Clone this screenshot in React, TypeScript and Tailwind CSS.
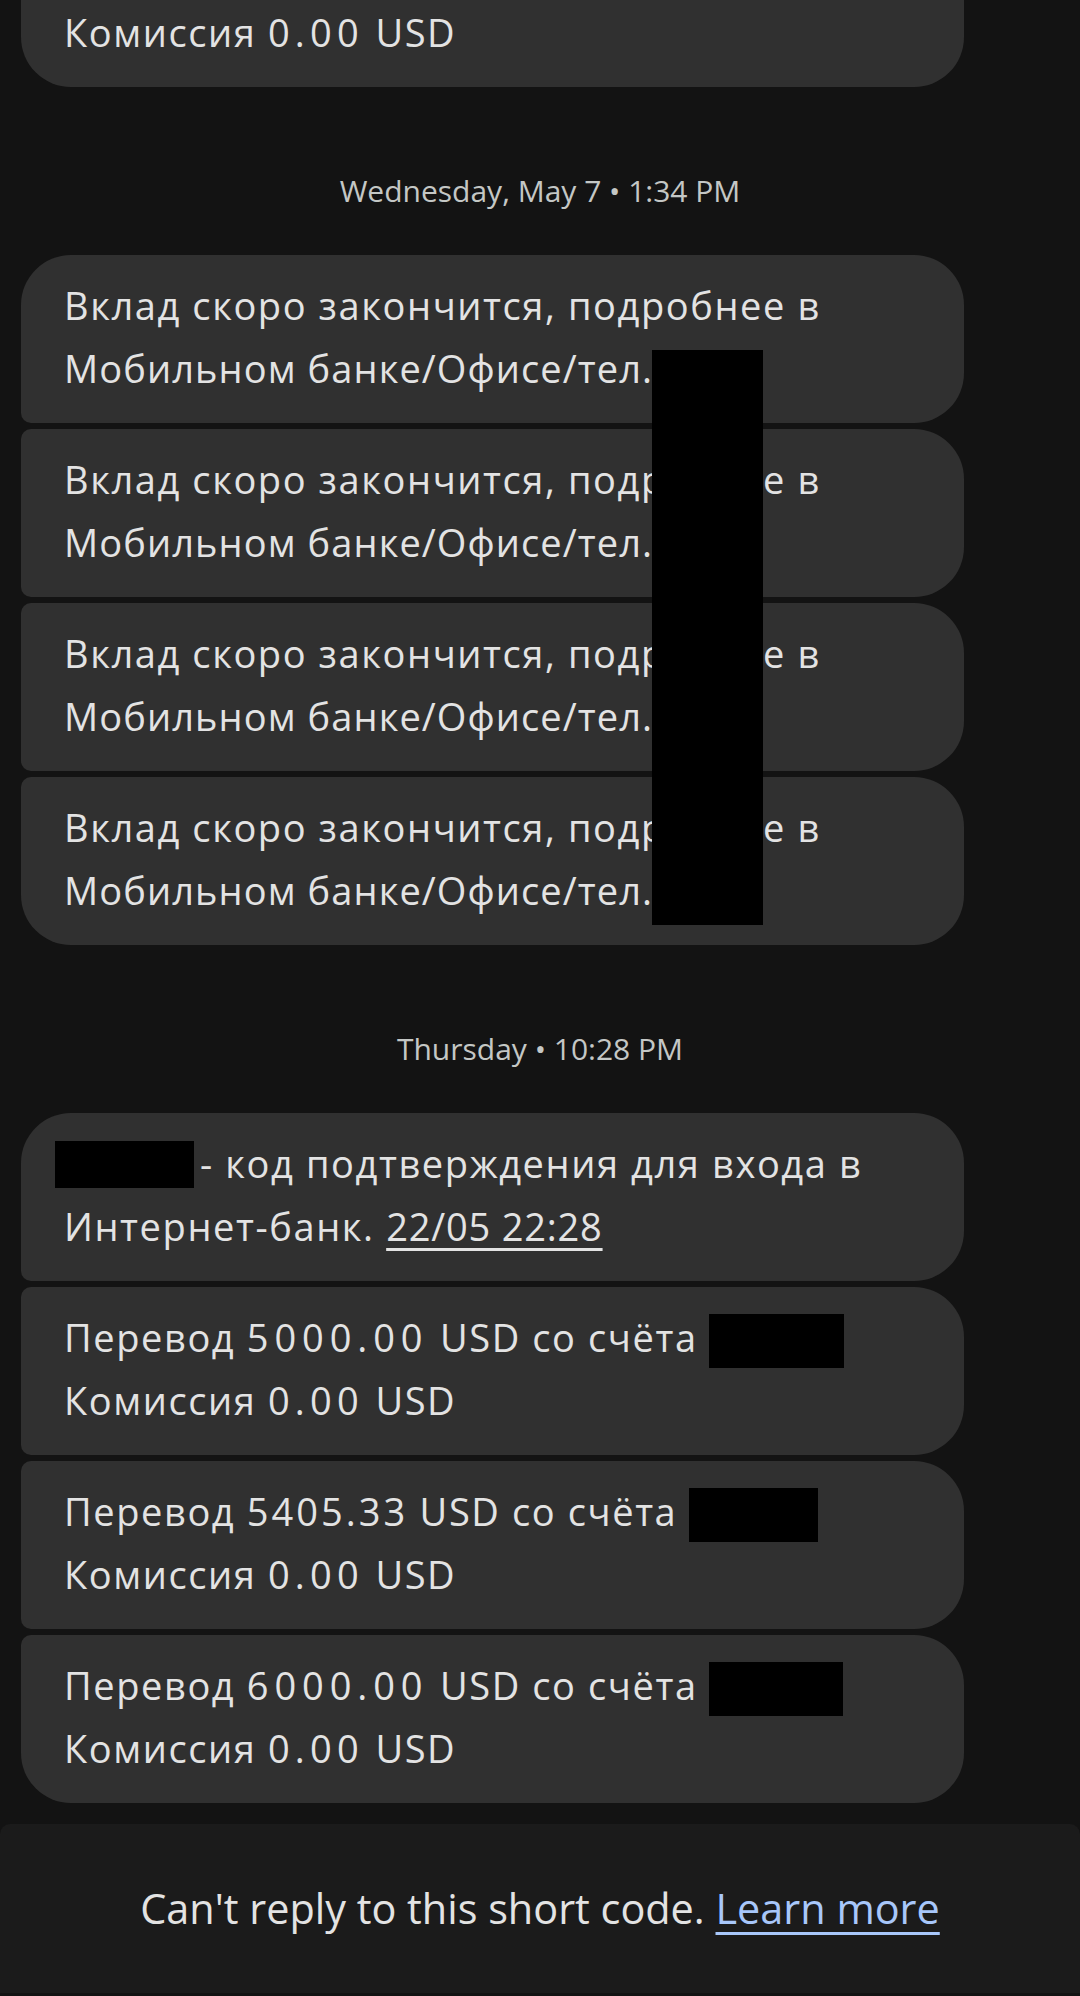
import React from "react";

type Pos = "first" | "middle" | "last";

const FONT = { fontFamily: "'Open Sans', Roboto, sans-serif" };

const cornerClass: Record<Pos, string> = {
  first: "rounded-tl-[50px] rounded-bl-[10px]",
  middle: "rounded-tl-[10px] rounded-bl-[10px]",
  last: "rounded-tl-[10px] rounded-bl-[50px]",
};

const Bubble = ({ pos, children }: { pos: Pos; children: React.ReactNode }) => (
  <div
    className={`ml-[21px] w-[943px] bg-[#303030] rounded-tr-[50px] rounded-br-[50px] ${cornerClass[pos]} pl-[43px] pr-[30px] pt-[19px] pb-[23px] text-[38px] leading-[63px] tracking-[1.6px] text-[#e3e3e3] whitespace-nowrap`}
  >
    {children}
  </div>
);

// black box hiding an account number
const Redact = ({ w }: { w: string }) => (
  <span className={`inline-block bg-black h-[54px] align-[-16px] ${w}`} />
);

const DateHeader = ({ label }: { label: string }) => (
  <div className="pt-[84px] pb-[44px] text-center text-[30px] leading-[40px] text-[#c4c7c5]">{label}</div>
);

const Deposit = ({ pos }: { pos: Pos }) => (
  <Bubble pos={pos}>
    Вклад скоро закончится, подробнее в
    <br />
    <span className="tracking-[1.1px]">Мобильном банке/Офисе/тел.</span>
  </Bubble>
);

const Fee = () => (
  <>
    Комиссия <span className="tracking-[5.2px]">0.00</span> USD
  </>
);

const Transfer = ({ pos, amount, track, w }: { pos: Pos; amount: string; track: string; w: string }) => (
  <Bubble pos={pos}>
    Перевод <span className={track}>{amount}</span> USD со счёта <Redact w={w} />
    <br />
    <Fee />
  </Bubble>
);

export default function App() {
  return (
    <div className="h-[1996px] overflow-hidden bg-[#131313]" style={FONT}>
      <div className="-mt-[81px] flex flex-col">
        <Bubble pos="last">
          Перевод 3000.00 USD со счёта
          <br />
          <Fee />
        </Bubble>

        <DateHeader label="Wednesday, May 7 • 1:34 PM" />

        <div className="relative flex flex-col gap-[6px]">
          <Deposit pos="first" />
          <Deposit pos="middle" />
          <Deposit pos="middle" />
          <Deposit pos="last" />
          <div className="absolute left-[652px] top-[95px] w-[111px] h-[575px] bg-black" />
        </div>

        <DateHeader label="Thursday • 10:28 PM" />

        <div className="flex flex-col gap-[6px]">
          <Bubble pos="first">
            <span className="inline-block bg-black w-[139px] h-[47px] align-[-10px] -ml-[9px] mr-[6px]" />
            - код подтверждения для входа в
            <br />
            Интернет-банк.{" "}
            <span className="underline decoration-[2.5px] underline-offset-[7px] tracking-[0.8px]">22/05 22:28</span>
          </Bubble>
          <Transfer pos="middle" amount="5000.00" track="tracking-[5.9px]" w="w-[135px]" />
          <Transfer pos="middle" amount="5405.33" track="tracking-[3px]" w="w-[129px]" />
          <Transfer pos="last" amount="6000.00" track="tracking-[5.9px]" w="w-[134px]" />
        </div>

        <div className="mt-[21px] h-[169px] rounded-t-[10px] bg-[#1b1b1b] flex items-center justify-center text-[41.4px] text-[#e3e3e3]">
          <span>
            Can't reply to this short code.{" "}
            <span className="text-[#a8c7fa] underline decoration-[3px] underline-offset-[8px]">Learn more</span>
          </span>
        </div>
      </div>
    </div>
  );
}
